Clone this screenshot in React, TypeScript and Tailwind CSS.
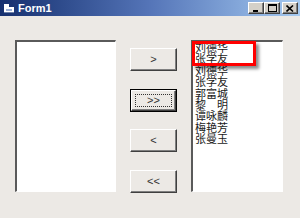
import React from "react";

const raised =
  "border-t border-l border-t-white border-l-white border-r border-b border-r-[#404040] border-b-[#404040] shadow-[inset_-1px_-1px_0_#808080]";

function CapButton({ children, cls = "" }: { children: React.ReactNode; cls?: string }) {
  return (
    <div className={`w-[16px] h-[12px] bg-[#d4d0c8] flex items-center justify-center ${raised} ${cls}`}>
      {children}
    </div>
  );
}

function PushButton({ label, isDefault = false }: { label: string; isDefault?: boolean }) {
  if (isDefault) {
    return (
      <div className="w-[47px] h-[23px] border border-black">
        <div className={`w-full h-full bg-[#ece9e5] flex items-center justify-center p-[3px] ${raised}`}>
          <div className="w-full h-full border border-dotted border-[#333] flex items-center justify-center text-[11px] leading-none text-[#333]">
            {label}
          </div>
        </div>
      </div>
    );
  }
  return (
    <div
      className={`w-[47px] h-[23px] bg-[#ece9e5] flex items-center justify-center text-[11px] leading-none text-[#333] ${raised}`}
    >
      {label}
    </div>
  );
}

export default function App() {
  const names = ["刘德华", "张学友", "刘德华", "张学友", "郭富城", "黎　明", "谭咏麟", "梅艳芳", "张曼玉"];
  return (
    <div
      className="w-[300px] h-[218px] bg-[#ece9e5] overflow-hidden relative"
      style={{ fontFamily: '"Liberation Sans", "Noto Sans CJK SC", sans-serif' }}
    >
      <div className="h-[16px] flex items-center bg-linear-to-r from-[#16306f] via-[#5575b8] to-[#a6caf0]">
        <svg width="12" height="11" viewBox="0 0 12 11" className="ml-[3px]">
          <rect x="1" y="1" width="5" height="3" fill="#fff" />
          <rect x="1" y="4" width="10" height="6" fill="#fff" />
          <rect x="3" y="6" width="6" height="2" fill="#9cb0d8" />
          <rect x="1" y="9" width="10" height="1" fill="#6b7fa8" />
        </svg>
        <span className="ml-[3px] text-white font-bold text-[11px] leading-none">Form1</span>
        <div className="ml-auto flex items-center mr-[2px]">
          <CapButton>
            <svg width="8" height="8" viewBox="0 0 8 8">
              <rect x="1" y="6" width="5" height="2" fill="#000" />
            </svg>
          </CapButton>
          <CapButton>
            <svg width="9" height="8" viewBox="0 0 9 8">
              <rect x="0.5" y="0.5" width="8" height="7" fill="none" stroke="#000" />
              <rect x="0" y="1" width="9" height="1" fill="#000" />
            </svg>
          </CapButton>
          <CapButton cls="ml-[2px]">
            <svg width="8" height="7" viewBox="0 0 8 7">
              <path d="M0.5 0.5 L7 6.5 M7 0.5 L0.5 6.5" stroke="#000" strokeWidth="1.6" />
            </svg>
          </CapButton>
        </div>
      </div>

      <div className="flex pl-[15px] pt-[24px]">
        <div className="w-[101px] h-[152px] bg-white border-t-2 border-l-2 border-t-[#5a5a5a] border-l-[#5a5a5a] border-r border-b border-r-white border-b-white" />

        <div className="ml-[14px] pt-[8px] flex flex-col gap-[17.67px]">
          <PushButton label=">" />
          <PushButton label=">>" isDefault />
          <PushButton label="<" />
          <PushButton label="<<" />
        </div>

        <div className="ml-[14px] w-[92px] h-[152px] bg-white border-t-2 border-l-2 border-t-[#5a5a5a] border-l-[#5a5a5a] border-r border-b border-r-white border-b-white pl-[2px]">
          <div
            className="text-[11px] leading-[11.4px] text-[#1a1a1a]"
            style={{ fontFamily: '"Noto Sans CJK SC", sans-serif' }}
          >
            {names.map((n, i) => (
              <div key={i} className="whitespace-pre">
                {n}
              </div>
            ))}
          </div>
        </div>
      </div>

      <div className="absolute left-[192px] top-[41px] w-[64px] h-[25px] border-[3px] border-[#f00] shadow-[3px_3px_3px_rgba(0,0,0,0.45)]" />
    </div>
  );
}
